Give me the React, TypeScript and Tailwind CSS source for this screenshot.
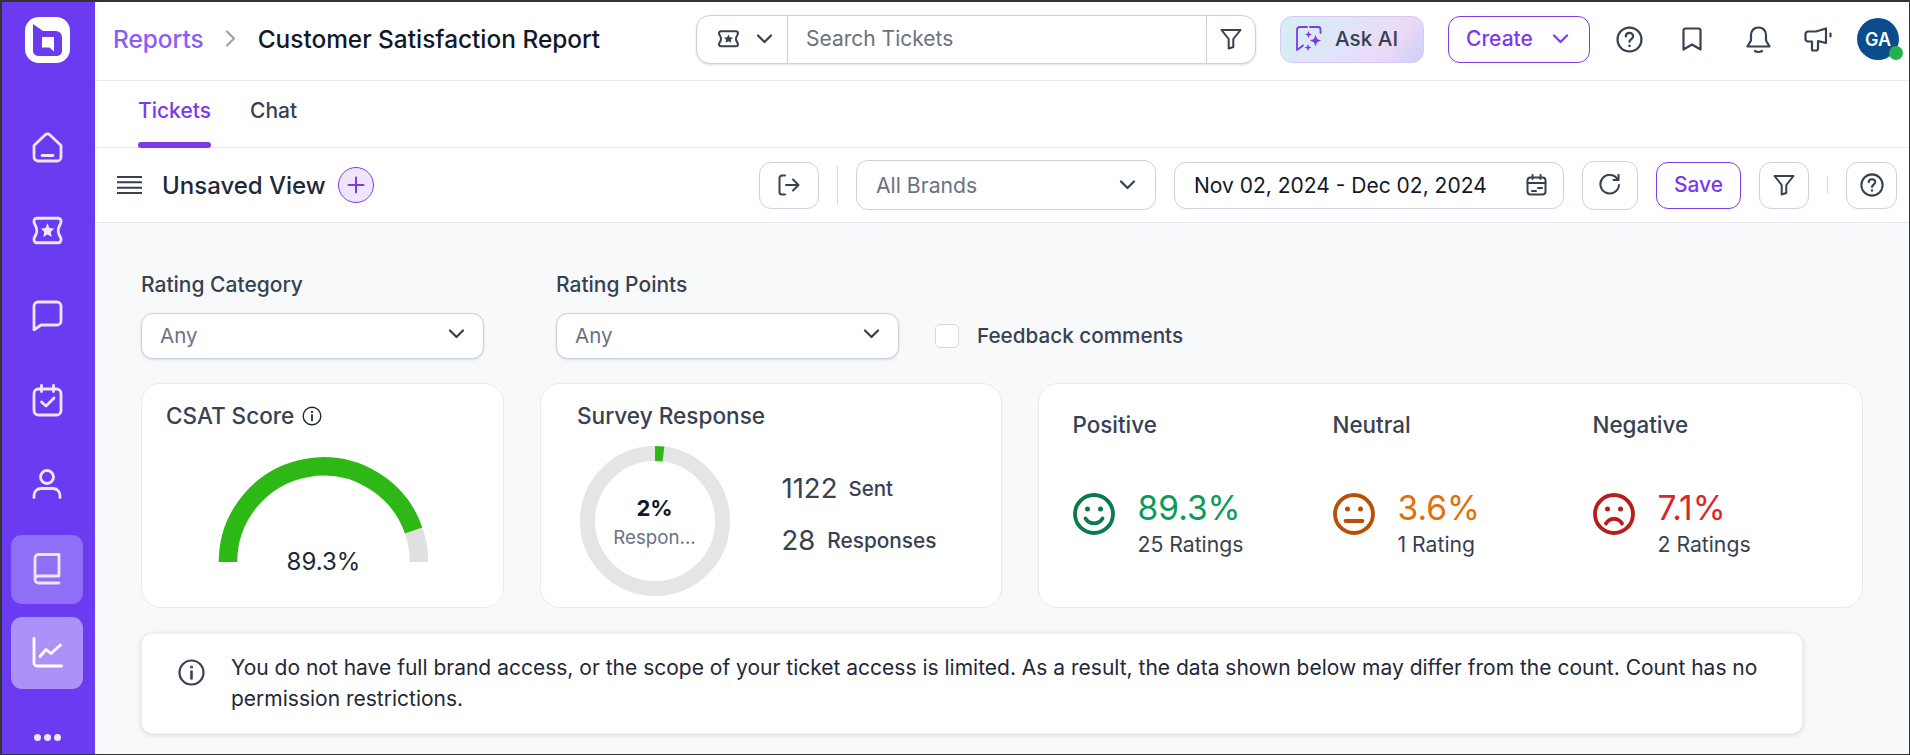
import React from "react";

const Chevron = ({ c = "#374151", w = 17 }: { c?: string; w?: number }) => (
  <svg width={w} height={10} viewBox="0 0 17 10" fill="none" stroke={c} strokeWidth={2.2} strokeLinecap="round" strokeLinejoin="round">
    <path d="M2 1.5l6.5 6.5L15 1.5" />
  </svg>
);

const Funnel = ({ size = 22 }: { size?: number }) => (
  <svg width={size} height={size} viewBox="0 0 22 22" fill="none" stroke="#374151" strokeWidth={2} strokeLinejoin="round" strokeLinecap="round">
    <path d="M1.5 2h19l-7.2 9v8l-4.6 1.5V11z" />
  </svg>
);

const Help = ({ size = 26 }: { size?: number }) => (
  <svg width={size} height={size} viewBox="0 0 26 26" fill="none" stroke="#374151" strokeWidth={2.2} strokeLinecap="round">
    <circle cx="13" cy="13" r="11.5" />
    <path d="M9.5 10c0-2 1.6-3.3 3.5-3.3s3.5 1.3 3.5 3.1c0 2.6-3.5 2.9-3.5 5.4" />
    <circle cx="13" cy="19" r="0.6" fill="#374151" strokeWidth={1.4} />
  </svg>
);

const Ticket = ({ c, w, h, sw }: { c: string; w: number; h?: number; sw: number }) => (
  <svg width={w} height={h ?? (w * 26) / 34} viewBox="0 0 34 26" preserveAspectRatio="none" fill="none" stroke={c} strokeWidth={sw} strokeLinejoin="round">
    <path d="M6 2h22c1.7 0 3 1.3 3 3 0 2.5-3 4-3 8s3 5.5 3 8c0 1.7-1.3 3-3 3H6c-1.7 0-3-1.3-3-3 0-2.5 3-4 3-8S3 7.5 3 5c0-1.7 1.3-3 3-3z" />
    <path d="M17 6.500l2.100 4.200 4.600.6-3.300 3.100.9 4.500-4.300-2.300-4.300 2.300.9-4.500-3.300-3.100 4.600-.6z" fill={c} stroke="none" />
  </svg>
);

const Smiley = ({ c, kind }: { c: string; kind: "pos" | "neu" | "neg" }) => (
  <svg width={42} height={42} viewBox="0 0 42 42" fill="none" stroke={c} strokeWidth={3.8} strokeLinecap="round" className="shrink-0">
    <circle cx="21" cy="21" r="19" />
    <circle cx="14.5" cy="16" r="2.5" fill={c} stroke="none" />
    <circle cx="27.5" cy="16" r="2.5" fill={c} stroke="none" />
    {kind === "pos" && <path d="M12.5 25.5c2 3.4 5 4.8 8.5 4.8s6.500-1.400 8.500-4.800" />}
    {kind === "neu" && <path d="M12.5 28h17" />}
    {kind === "neg" && <path d="M13 30.500c1.800-3.200 4.600-4.700 8-4.700s6.200 1.500 8 4.700" />}
  </svg>
);

const SideItem = ({ children, bg }: { children: React.ReactNode; bg?: string }) => (
  <div className={`flex items-center justify-center w-[72px] rounded-[11px] ${bg ?? ""}`}>{children}</div>
);

const Stat = ({ title, value, sub, color, face, kind }: { title: string; value: string; sub: string; color: string; face: string; kind: "pos" | "neu" | "neg" }) => (
  <div className="flex flex-col w-[260px]">
    <div className="text-[22.400px] leading-[26px] font-medium text-[#374151]">{title}</div>
    <div className="flex items-center gap-[23px] mt-[34px]">
      <Smiley c={face} kind={kind} />
      <div className="flex flex-col mt-[17px]">
        <div className="text-[33.500px] leading-[38px]" style={{ color }}>{value}</div>
        <div className="text-[21.200px] leading-[24px] mt-[5px] text-[#374151]">{sub}</div>
      </div>
    </div>
  </div>
);

const Box = ({ cls, children }: { cls: string; children: React.ReactNode }) => (
  <div className={`flex items-center bg-white border border-[#cbd2dc] rounded-[12px] shrink-0 ${cls}`}>{children}</div>
);

export default function App() {
  return (
    <div className="w-[1910px] h-[755px] overflow-hidden flex border-t-2 border-l-2 border-b border-r border-[#333333] font-['Inter',sans-serif] bg-[#f8f9fb]">
      {/* Sidebar */}
      <aside className="w-[93px] shrink-0 bg-[#6a3bf0] flex flex-col items-center pt-[15px] pr-[3px]">
        <svg width={45} height={46} viewBox="0 0 45 46">
          <rect width="45" height="46" rx="14" fill="#ffffff" />
          <path d="M8 7l10 7h13a6 6 0 0 1 6 6v14a5 5 0 0 1-5 5H13a5 5 0 0 1-5-5z" fill="#6a3bf0" />
          <path d="M17 20h12v14.500l-4.500-4H17z" fill="#ffffff" />
        </svg>
        <svg className="mt-[69px]" width={31} height={31} viewBox="0 0 31 31" fill="none" stroke="#ece7fd" strokeWidth={2.800} strokeLinecap="round" strokeLinejoin="round">
          <path d="M2 13.500L13 3a3.500 3.500 0 0 1 5 0l11 10.500V25a4 4 0 0 1-4 4H6a4 4 0 0 1-4-4z" />
          <path d="M10 23.500h11" />
        </svg>
        <div className="mt-[53px] flex"><Ticket c="#ece7fd" w={33} h={29} sw={2.800} /></div>
        <svg className="mt-[55px]" width={31} height={31} viewBox="0 0 31 31" fill="none" stroke="#ece7fd" strokeWidth={2.800} strokeLinejoin="round">
          <path d="M2 6a4 4 0 0 1 4-4h19a4 4 0 0 1 4 4v15a4 4 0 0 1-4 4H9l-7 5z" />
        </svg>
        <svg className="mt-[53px]" width={31} height={33} viewBox="0 0 31 33" fill="none" stroke="#ece7fd" strokeWidth={2.800} strokeLinecap="round" strokeLinejoin="round">
          <rect x="2" y="5" width="27" height="26" rx="4.500" />
          <path d="M9.500 1.500v6M21.500 1.500v6M9.500 18l4.500 4 8-8" />
        </svg>
        <svg className="mt-[52px]" width={30} height={30} viewBox="0 0 30 30" fill="none" stroke="#ece7fd" strokeWidth={2.800} strokeLinecap="round">
          <circle cx="15" cy="8" r="6.500" />
          <path d="M2 28.500v-2a7 7 0 0 1 7-7h12a7 7 0 0 1 7 7v2" />
        </svg>
        <div className="mt-[35.500px]">
          <SideItem bg="bg-[#8f6ff6] h-[69px]">
            <svg width={28} height={32} viewBox="0 0 28 32" fill="none" stroke="#ece7fd" strokeWidth={2.800} strokeLinecap="round" strokeLinejoin="round">
              <path d="M2 26V5a3.500 3.500 0 0 1 3.500-3.500H26V23H5.500A3.500 3.500 0 0 0 2 26.500 3.500 3.500 0 0 0 5.500 30H26" />
            </svg>
          </SideItem>
        </div>
        <div className="mt-[13px]">
          <SideItem bg="bg-[#ac91f8] h-[72px]">
            <svg width={31} height={31} viewBox="0 0 31 31" fill="none" stroke="#ffffff" strokeWidth={2.800} strokeLinecap="round" strokeLinejoin="round">
              <path d="M2 1.500V26a3 3 0 0 0 3 3h24.500" />
              <path d="M8 19.500l6-7 5 4 9.500-8.500" />
            </svg>
          </SideItem>
        </div>
        <div className="mt-[45px] flex gap-[3px]">
          <span className="w-[7px] h-[7px] rounded-full bg-[#ece7fd]" />
          <span className="w-[7px] h-[7px] rounded-full bg-[#ece7fd]" />
          <span className="w-[7px] h-[7px] rounded-full bg-[#ece7fd]" />
        </div>
      </aside>

      <main className="flex-1 min-w-0 flex flex-col">
        {/* Header */}
        <header className="h-[79px] shrink-0 bg-white border-b border-[#e7e9ef] flex items-center pb-[4px]">
          <div className="w-[601px] shrink-0 flex items-center pl-[18px] text-[24.400px] font-medium">
            <span className="text-[#8b5cf6]">Reports</span>
            <svg className="ml-[21px] mr-[22px]" width={11} height={17} viewBox="0 0 11 17" fill="none" stroke="#9ca3af" strokeWidth={2.200} strokeLinecap="round" strokeLinejoin="round"><path d="M2 1.500l7 7-7 7" /></svg>
            <span className="text-[#111827]">Customer Satisfaction Report</span>
          </div>
          <div className="w-[560px] h-[49px] shrink-0 flex items-stretch bg-white border border-[#cbd2dc] rounded-[14px] shadow-sm">
            <div className="w-[91px] flex items-center pl-[20px] gap-[16px] border-r border-[#cbd2dc]">
              <Ticket c="#374151" w={23} sw={3} />
              <Chevron />
            </div>
            <div className="flex-1 flex items-center pl-[18px] text-[21px] text-[#6b7280]">Search Tickets</div>
            <div className="w-[49px] flex items-center justify-center border-l border-[#cbd2dc]">
              <Funnel />
            </div>
          </div>
          <div className="ml-[24px] w-[144px] h-[47px] shrink-0 rounded-[12px] border border-[#d8c8f8] bg-[linear-gradient(130deg,#d4f0f2_0%,#e0e4fa_45%,#ecd9f6_75%,#c9cffb_100%)] flex items-center pl-[15px] gap-[13px]">
            <svg width={26} height={28} viewBox="0 0 26 28" fill="none" className="shrink-0">
              <path d="M11 2H3.500A2.500 2.500 0 0 0 1 4.500V25l6-4.500M14 2h8a2.500 2.500 0 0 1 2.500 2.500V8" stroke="#7c3aed" strokeWidth={1.800} strokeLinecap="round" strokeLinejoin="round" />
              <path d="M12.500 6l1 2.500 2.500 1-2.500 1-1 2.500-1-2.500-2.500-1 2.500-1zM19.500 10l1.600 4 4 1.600-4 1.600-1.600 4-1.600-4-4-1.600 4-1.600zM12 19l1 2.500 2.500 1-2.500 1-1 2.500-1-2.500-2.500-1 2.500-1z" fill="#7c3aed" />
            </svg>
            <span className="text-[20.700px] font-medium text-[#374151]">Ask AI</span>
          </div>
          <div className="ml-[24px] w-[142px] h-[47px] shrink-0 rounded-[12px] border border-[#7c3aed] bg-white flex items-center pl-[17px] gap-[19px]">
            <span className="text-[21px] font-medium text-[#7c3aed]">Create</span>
            <Chevron c="#7c3aed" />
          </div>
          <div className="ml-[26px]"><Help size={27} /></div>
          <svg className="ml-[39px]" width={20} height={24} viewBox="0 0 20 24" fill="none" stroke="#374151" strokeWidth={2.200} strokeLinejoin="round"><path d="M1.500 3.500a2 2 0 0 1 2-2h13a2 2 0 0 1 2 2v19L10 17.500 1.500 22.500z" /></svg>
          <svg className="ml-[44px]" width={25} height={27} viewBox="0 0 25 27" fill="none" stroke="#374151" strokeWidth={2.200} strokeLinecap="round" strokeLinejoin="round"><path d="M12.500 1.500c-4.500 0-7.500 3.200-7.500 7.500v5.500L1.500 20.500h22L20 14.500V9c0-4.300-3-7.500-7.500-7.500z" /><path d="M9 25c1.800 1.200 5.200 1.200 7 0" /></svg>
          <svg className="ml-[33px]" width={28} height={25} viewBox="0 0 28 25" fill="none" stroke="#374151" strokeWidth={2.200} strokeLinecap="round" strokeLinejoin="round"><path d="M1.500 7a2.500 2.500 0 0 1 2.500-2.500h8L22 1.500v14.500L14 14v7.500a2 2 0 0 1-2 2h-2.500A1.500 1.500 0 0 1 8 22v-7.500H4A2.500 2.500 0 0 1 1.500 12z" /><path d="M26.500 6.500v3" /></svg>
          <div className="ml-[25px] relative w-[42px] h-[42px] rounded-full bg-[#0b4d8c] flex items-center justify-center text-white text-[18px] font-semibold">
            GA
            <span className="absolute right-[-4px] bottom-0 w-[14px] h-[14px] rounded-full bg-[#22b24c]" />
          </div>
        </header>

        {/* Tabs */}
        <nav className="h-[67px] shrink-0 bg-white border-b border-[#e7e9ef] flex items-stretch pl-[43px] gap-[39px] text-[21px] font-medium">
          <div className="relative flex items-center text-[#7c3aed] pb-[7px] w-[73px] justify-center">
            Tickets
            <span className="absolute left-0 right-0 bottom-[-1px] h-[6px] rounded-full bg-[#7c3aed]" />
          </div>
          <div className="flex items-center text-[#374151] pb-[7px]">Chat</div>
        </nav>

        {/* Toolbar */}
        <div className="h-[75px] shrink-0 bg-white border-b border-[#e7e9ef] flex items-center pl-[22px] pr-[12px]">
          <svg width={25} height={18} viewBox="0 0 25 18" stroke="#374151" strokeWidth={2}>
            <path d="M0 1h25M0 6.300h25M0 11.700h25M0 17h25" />
          </svg>
          <span className="ml-[20px] mt-[2px] text-[24px] font-medium text-[#1f2937]">Unsaved View</span>
          <div className="ml-[12px] w-[36px] h-[36px] rounded-full bg-[#ede6fd] border border-[#7c3aed] flex items-center justify-center">
            <svg width={18} height={18} viewBox="0 0 18 18" stroke="#7c3aed" strokeWidth={2} strokeLinecap="round"><path d="M9 1.500v15M1.500 9h15" /></svg>
          </div>
          <div className="ml-auto flex items-center">
            <Box cls="justify-center w-[60px] h-[47px]">
              <svg width={22} height={22} viewBox="0 0 22 22" fill="none" stroke="#374151" strokeWidth={2} strokeLinecap="round" strokeLinejoin="round">
                <path d="M7 1.500H4a2.500 2.500 0 0 0-2.500 2.500v14A2.500 2.500 0 0 0 4 20.500h3M8 11h12.500M15 5.500l5.500 5.500-5.500 5.500" />
              </svg>
            </Box>
            <div className="w-px h-[39px] bg-[#d6dae1] mx-[18px]" />
            <Box cls="justify-between w-[300px] h-[50px] px-[19px]">
              <span className="mt-[1px] text-[21.200px] text-[#6b7280]">All Brands</span>
              <Chevron />
            </Box>
            <Box cls="justify-between ml-[18px] w-[390px] h-[47px] pl-[19px] pr-[16px]">
              <span className="mt-[1px] text-[21px] text-[#111827]">Nov 02, 2024 - Dec 02, 2024</span>
              <svg width={21} height={22} viewBox="0 0 21 22" fill="none" stroke="#374151" strokeWidth={2} strokeLinecap="round" strokeLinejoin="round">
                <rect x="1.500" y="3.500" width="18" height="17" rx="3" />
                <path d="M6.500 1v4M14.500 1v4M1.500 9h18M12 14h4M6 17h4" />
              </svg>
            </Box>
            <Box cls="justify-center ml-[18px] w-[56px] h-[49px]">
              <svg width={22} height={22} viewBox="0 0 22 22" fill="none" stroke="#374151" strokeWidth={2.100} strokeLinecap="round" strokeLinejoin="round">
                <path d="M18.500 5A9.300 9.300 0 1 0 20 11" />
                <path d="M19.500 1v5h-5" />
              </svg>
            </Box>
            <div className="ml-[18px] w-[85px] h-[47px] flex items-center justify-center rounded-[12px] border border-[#7c3aed] bg-white text-[21px] font-medium text-[#7c3aed]">Save</div>
            <Box cls="justify-center ml-[18px] w-[50px] h-[47px]"><Funnel /></Box>
            <div className="w-px h-[18px] bg-[#d6dae1] mx-[18px]" />
            <Box cls="justify-center w-[51px] h-[47px]"><Help size={24} /></Box>
          </div>
        </div>

        {/* Content */}
        <div className="flex-1 pl-[46px] pt-[50px]">
          <div className="flex items-end">
            <div className="w-[343px] shrink-0">
              <div className="text-[21px] leading-[24px] font-medium text-[#374151]">Rating Category</div>
              <div className="mt-[16px] h-[46px] bg-white border border-[#cbd2dc] rounded-[12px] shadow-sm flex items-center justify-between pl-[18px] pr-[18px]">
                <span className="text-[20.500px] text-[#6b7280]">Any</span>
                <div className="mb-[4px]"><Chevron /></div>
              </div>
            </div>
            <div className="ml-[72px] w-[343px] shrink-0">
              <div className="text-[21px] leading-[24px] font-medium text-[#374151]">Rating Points</div>
              <div className="mt-[16px] h-[46px] bg-white border border-[#cbd2dc] rounded-[12px] shadow-sm flex items-center justify-between pl-[18px] pr-[18px]">
                <span className="text-[20.500px] text-[#6b7280]">Any</span>
                <div className="mb-[4px]"><Chevron /></div>
              </div>
            </div>
            <div className="ml-[36px] h-[46px] flex items-center">
              <span className="w-[24px] h-[24px] rounded-[5px] bg-white border border-[#d5d9e0]" />
              <span className="ml-[18px] text-[20.700px] font-medium text-[#374151]">Feedback comments</span>
            </div>
          </div>

          <div className="mt-[24px] flex items-stretch">
            <section className="w-[363px] h-[225px] bg-white border border-[#e8eaef] rounded-[20px] pl-[24px] pt-[19px]">
              <div className="flex items-center gap-[8px] text-[22.500px] leading-[26px] font-medium text-[#374151]">
                CSAT Score
                <svg width={20} height={20} viewBox="0 0 20 20" fill="none" stroke="#1f2937" strokeWidth={1.400} strokeLinecap="round">
                  <circle cx="10" cy="10" r="8.800" />
                  <path d="M10 9v5.500" strokeWidth={1.800} />
                  <circle cx="10" cy="6" r="0.400" strokeWidth={1.500} />
                </svg>
              </div>
              <div className="ml-[53px] mt-[29px] w-[209px] h-[104px] relative">
                <svg width={209} height={104} viewBox="0 0 209 104" fill="none" strokeWidth={18.500} className="overflow-visible">
                  <path d="M194.650 72.440A95.500 95.500 0 0 1 200 104" stroke="#e0e0e0" />
                  <path d="M9 104A95.500 95.500 0 0 1 194.650 72.440" stroke="#2eb816" />
                </svg>
                <div className="absolute left-0 right-0 top-[90px] text-center text-[24px] leading-[28px] text-[#1f2937]">89.3%</div>
              </div>
            </section>

            <section className="ml-[36px] w-[462px] h-[225px] bg-white border border-[#e8eaef] rounded-[20px] pl-[36px] pt-[19px]">
              <div className="text-[22.600px] leading-[26px] font-medium text-[#374151]">Survey Response</div>
              <div className="mt-[17px] flex items-center pl-[2.500px]">
                <div className="relative w-[150px] h-[150px] shrink-0">
                  <svg width={150} height={150} viewBox="0 0 150 150" fill="none" strokeWidth={15}>
                    <circle cx="75" cy="75" r="67.500" stroke="#e5e5e5" />
                    <path d="M75 7.500A67.500 67.500 0 0 1 83.460 8.030" stroke="#2eb816" />
                  </svg>
                  <div className="absolute inset-0 flex flex-col items-center justify-center pt-[1px]">
                    <div className="text-[22px] leading-[28px] font-bold text-[#111827]">2%</div>
                    <div className="text-[18.700px] leading-[24px] mt-[4px] text-[#6b7280]">Respon...</div>
                  </div>
                </div>
                <div className="ml-[52px] flex flex-col gap-[25px] pb-[13px]">
                  <div className="flex items-center gap-[11px]">
                    <span className="text-[27.500px] leading-[27px] text-[#374151]">1122</span>
                    <span className="text-[20.500px] leading-[27px] font-medium text-[#374151]">Sent</span>
                  </div>
                  <div className="flex items-center gap-[12px]">
                    <span className="text-[27.500px] leading-[27px] text-[#374151]">28</span>
                    <span className="text-[20.800px] leading-[27px] font-medium text-[#374151]">Responses</span>
                  </div>
                </div>
              </div>
            </section>

            <section className="ml-[36px] w-[825px] h-[225px] bg-white border border-[#e8eaef] rounded-[20px] pl-[33.500px] pt-[28px] flex">
              <Stat title="Positive" value="89.3%" sub="25 Ratings" color="#0a9b5c" face="#0a7a4b" kind="pos" />
              <Stat title="Neutral" value="3.6%" sub="1 Rating" color="#e2700a" face="#b94f06" kind="neu" />
              <Stat title="Negative" value="7.1%" sub="2 Ratings" color="#dc2626" face="#b91c1c" kind="neg" />
            </section>
          </div>

          <div className="mt-[25px] w-[1662px] h-[101px] bg-white rounded-[11px] border border-[#eef0f3] shadow-[0_1px_4px_rgba(17,24,39,0.16)] flex items-start pl-[36px] pr-[30px] pt-[18px]">
            <svg className="shrink-0 mt-[7px]" width={27} height={27} viewBox="0 0 27 27" fill="none" stroke="#374151" strokeWidth={2.200} strokeLinecap="round">
              <circle cx="13.500" cy="13.500" r="12" />
              <path d="M13.500 12.500v7" strokeWidth={2.600} />
              <circle cx="13.500" cy="8" r="0.600" strokeWidth={2} />
            </svg>
            <p className="ml-[26px] text-[21px] leading-[31px] text-[#1f2937]">
              You do not have full brand access, or the scope of your ticket access is limited. As a result, the data shown below may differ from the count. Count has no permission restrictions.
            </p>
          </div>
        </div>
      </main>
    </div>
  );
}
